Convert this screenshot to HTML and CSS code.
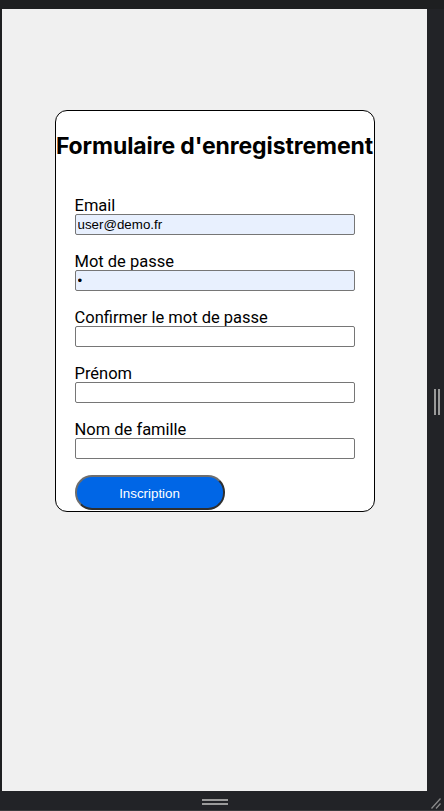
FILE: index.html
```html
<!DOCTYPE html>
<html lang="fr">
<head>
<meta charset="utf-8">
<title>Formulaire d'enregistrement</title>
<link rel="stylesheet" href="styles.css">
</head>
<body>
<div class="frame">
  <div class="topbar"></div>
  <div class="middle">
    <div class="leftstrip"></div>
    <main class="viewport">
      <form class="card">
        <h2 class="title">Formulaire d'enregistrement</h2>
        <div class="field">
          <label class="label" for="email">Email</label>
          <input class="input filled" id="email" type="text" value="user@demo.fr">
        </div>
        <div class="field">
          <label class="label" for="pw">Mot de passe</label>
          <input class="input filled" id="pw" type="password" value="x">
        </div>
        <div class="field">
          <label class="label" for="pw2">Confirmer le mot de passe</label>
          <input class="input" id="pw2" type="password">
        </div>
        <div class="field">
          <label class="label" for="fn">Prénom</label>
          <input class="input" id="fn" type="text">
        </div>
        <div class="field">
          <label class="label" for="ln">Nom de famille</label>
          <input class="input" id="ln" type="text">
        </div>
        <button class="submit" type="button">Inscription</button>
      </form>
    </main>
    <div class="rightstrip">
      <div class="vhandle"><span></span><span></span></div>
    </div>
  </div>
  <div class="bottombar">
    <div></div>
    <div class="hhandle"><span></span><span></span></div>
    <div class="corner">
      <svg width="10" height="12" viewBox="0 0 10 12"><path d="M0.5 11.5 L9.5 1.5 M5 11.5 L9.5 6.5" stroke="#8a8a8a" stroke-width="1.3" fill="none"/></svg>
    </div>
  </div>
</div>
</body>
</html>
```

FILE: styles.css
```css
html, body {
  margin: 0;
  padding: 0;
  background: #202124;
}

.frame {
  width: 444px;
  height: 811px;
  display: flex;
  flex-direction: column;
  background: #202124;
}

.topbar {
  height: 9px;
  background: #1e1f21;
}

.middle {
  display: flex;
  height: 782px;
}

.leftstrip {
  width: 2px;
  background: #1e1f21;
}

.viewport {
  width: 425px;
  background: #f0f0f0;
  display: flex;
  justify-content: center;
  align-items: flex-start;
  padding-top: 101px;
  box-sizing: border-box;
}

.rightstrip {
  width: 17px;
  background: #222327;
  display: flex;
  align-items: center;
  justify-content: flex-start;
  padding-left: 7px;
  box-sizing: border-box;
}

.vhandle {
  display: flex;
  gap: 2px;
  margin-top: 4px;
}

.vhandle span {
  width: 2px;
  height: 26px;
  background: #9a9a9a;
}

.bottombar {
  height: 20px;
  background: #222327;
  border-bottom: 1px solid #3a3b3e;
  box-sizing: border-box;
  display: grid;
  grid-template-columns: 200px 28px 1fr;
}

.hhandle {
  display: flex;
  flex-direction: column;
  gap: 2px;
  padding-top: 8px;
  padding-left: 2px;
}

.hhandle span {
  width: 26px;
  height: 2px;
  background: #9a9a9a;
}

.corner {
  display: flex;
  justify-content: flex-end;
  align-items: flex-end;
  padding-right: 3px;
  padding-bottom: 1px;
}

.card {
  width: 280px;
  padding: 0 19px;
  border: 1px solid #000;
  border-radius: 12px;
  background: #fff;
  height: 400px;
  box-sizing: content-box;
  font-family: Inter, "Noto Sans", sans-serif;
}

.title {
  margin: 22px -19px 35px;
  font-size: 23px;
  line-height: 27px;
  font-weight: 700;
  text-align: center;
  white-space: nowrap;
  color: #000;
  letter-spacing: -0.1px;
}

.field {
  margin-bottom: 16px;
}

.label {
  display: block;
  font-family: Roboto, "Noto Sans", sans-serif;
  font-size: 16.5px;
  line-height: 19px;
  color: #000;
  padding-top: 1px;
  margin-bottom: -1px;
}

.input {
  display: block;
  width: 280px;
  height: 21px;
  box-sizing: border-box;
  margin: 0;
  padding: 1px 2px;
  border: 1px solid #767676;
  border-radius: 2px;
  background: #fff;
  font-family: "Liberation Sans", Arial, sans-serif;
  font-size: 13.333px;
  color: #000;
}

.input.filled {
  background: #e8f0fe;
}

.submit {
  display: block;
  margin: 1px 0 0;
  width: 150px;
  height: 35px;
  box-sizing: border-box;
  border: 2px solid;
  border-color: #6e6e6e #2f2f2f #2f2f2f #6e6e6e;
  border-radius: 17px;
  background: #0066e6;
  color: #fff;
  font-family: "Liberation Sans", Arial, sans-serif;
  font-size: 13.333px;
  padding: 1px 0 0;
}
```
